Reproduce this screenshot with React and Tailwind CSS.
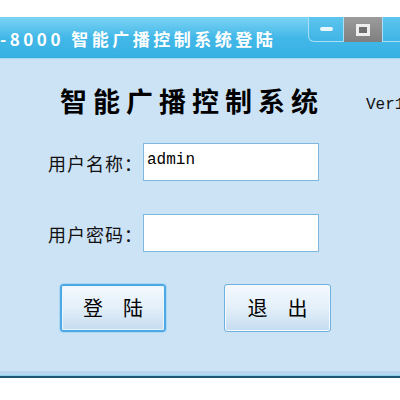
export default function App() {
  return (
    <div className="w-[400px] h-[400px] overflow-hidden bg-white font-['Noto_Sans_CJK_SC',sans-serif]">
      <div className="h-[17px]" />

      {/* title bar */}
      <div className="h-[42px] flex bg-gradient-to-b from-[#7ad3f4] via-[#42b8e8] to-[#36b0e3] border-b border-[#a6d9f2]">
        <div className="flex items-center pt-[2px] text-white font-bold text-[17px] tracking-[3.5px] whitespace-nowrap">
          -8000 智能广播控制系统登陆
        </div>
        <div className="ml-auto flex h-[25px] shrink-0 mr-[-20px]">
          <div className="w-[36px] h-full rounded-bl-[6px] border border-t-0 border-[#a8e0f7] bg-gradient-to-b from-[#5cc5ee] to-[#3fb4e6] flex items-center justify-center">
            <div className="w-[13px] h-[4px] rounded-[2px] bg-[#e8f7fd]" />
          </div>
          <div className="w-[38px] h-full bg-gradient-to-b from-[#9c9c9c] to-[#7f7f7f] flex items-center justify-center">
            <div className="w-[14px] h-[12px] border-[3px] border-[#eeeeee] bg-[#6f6f6f]" />
          </div>
          <div className="w-[38px] h-full border border-t-0 border-[#a8e0f7] bg-gradient-to-b from-[#5cc5ee] to-[#3fb4e6]" />
        </div>
      </div>

      {/* body */}
      <div className="h-[312px] bg-[#cce2f5] flex flex-col">
        <div className="mt-[28px] flex items-end whitespace-nowrap">
          <h1 className="ml-[60px] text-[27px] leading-[28px] font-bold tracking-[6px] text-black">智能广播控制系统</h1>
          <span className="ml-[42px] mb-[-2px] font-['Liberation_Mono',monospace] text-[16px] text-[#111]">Ver1.0</span>
        </div>

        <div className="mt-[28px] flex items-center h-[38px]">
          <label className="ml-[48px] w-[95px] text-[18px] tracking-[1px] text-[#111] pt-[3px] whitespace-nowrap">用户名称：</label>
          <div className="w-[176px] h-[38px] bg-white border border-[#7db8de] px-[3px] pt-[7px] font-['Liberation_Mono',monospace] text-[16px] leading-[19px] text-black">
            admin
          </div>
        </div>

        <div className="mt-[33px] flex items-center h-[38px]">
          <label className="ml-[48px] w-[95px] text-[18px] tracking-[1px] text-[#111] pt-[3px] whitespace-nowrap">用户密码：</label>
          <div className="w-[176px] h-[38px] bg-white border border-[#7db8de]" />
        </div>

        <div className="mt-[32px] flex">
          <button className="ml-[60px] w-[106px] h-[48px] rounded-[3px] border-2 border-[#4ea8e4] outline outline-1 outline-[#a9d7f4] shadow-[inset_0_0_0_1px_#e9f5fd] bg-gradient-to-b from-[#f4f9fe] via-[#e3eff9] to-[#c5dcf0] text-[20px] text-black">
            登　陆
          </button>
          <button className="ml-[58px] w-[107px] h-[48px] rounded-[3px] border border-[#6eb1de] shadow-[inset_0_0_0_1px_#f3f9fe] bg-gradient-to-b from-[#f4f9fe] via-[#e3eff9] to-[#c5dcf0] text-[20px] text-black">
            退　出
          </button>
        </div>
      </div>

      {/* bottom frame */}
      <div className="h-[4px] bg-[#b7d5ee]" />
      <div className="h-[1px] bg-[#8fd0ef]" />
      <div className="h-[2px] bg-[#1d5676]" />
    </div>
  );
}
